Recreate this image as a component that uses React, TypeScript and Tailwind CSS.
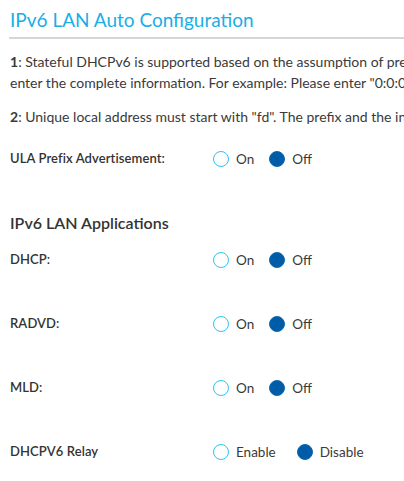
import React from "react";

type RadioProps = { checked: boolean; label: string };

function Radio({ checked, label }: RadioProps) {
  return (
    <span className="flex items-center">
      {checked ? (
        <span className="block h-[16px] w-[16px] rounded-full border border-[#0b6cb2] bg-[#005ca6]" />
      ) : (
        <span className="block h-[16px] w-[16px] rounded-full border-[1.5px] border-[#2ec3f2] bg-white" />
      )}
      <span className="ml-[7px] text-[13.5px] text-[#3a3a3a]">{label}</span>
    </span>
  );
}

type RowProps = { label: string; on: string; off: string; gap: string; className?: string };

function OptionRow({ label, on, off, gap, className }: RowProps) {
  return (
    <div className={"flex h-[20px] items-center " + (className ?? "")}>
      <div className="w-[203px] shrink-0 text-[13px] font-semibold tracking-[0.1px] text-[#333]">{label}</div>
      <div className={"flex items-center " + gap}>
        <Radio checked={false} label={on} />
        <Radio checked={true} label={off} />
      </div>
    </div>
  );
}

export default function App() {
  return (
    <div className="h-[481px] w-[404px] overflow-hidden bg-white pl-[10px] font-['Lato',sans-serif] text-[#333]">
      <div className="w-[640px]">
        <h1 className="pt-[8px] text-[19px] leading-[24px] text-[#1aaee6]">IPv6 LAN Auto Configuration</h1>
        <div className="-ml-[1px] mt-[5px] h-[2px] w-[400px] bg-[#d6d6d6]" />
        <p className="mt-[12px] whitespace-nowrap text-[14px] leading-[21px] text-[#3a3a3a]">
          <span className="font-bold">1</span>: Stateful DHCPv6 is supported based on the assumption of prefix delegation by the ISP.
          <br />
          enter the complete information. For example: Please enter "0:0:0:100::1" and "0:0:0:100::ffff"
        </p>
        <p className="mt-[13px] whitespace-nowrap text-[14px] leading-[21px] text-[#3a3a3a]">
          <span className="font-bold">2</span>: Unique local address must start with "fd". The prefix and the interface ID are required.
        </p>
        <OptionRow className="mt-[22px]" gap="gap-[15px]" label="ULA Prefix Advertisement:" on="On" off="Off" />
        <h2 className="mt-[44px] text-[16px] font-semibold leading-[20px] text-[#333]">IPv6 LAN Applications</h2>
        <OptionRow className="mt-[17px]" gap="gap-[15px]" label="DHCP:" on="On" off="Off" />
        <OptionRow className="mt-[44px]" gap="gap-[15px]" label="RADVD:" on="On" off="Off" />
        <OptionRow className="mt-[44px]" gap="gap-[15px]" label="MLD:" on="On" off="Off" />
        <OptionRow className="mt-[44px]" gap="gap-[21px]" label="DHCPV6 Relay" on="Enable" off="Disable" />
      </div>
    </div>
  );
}
